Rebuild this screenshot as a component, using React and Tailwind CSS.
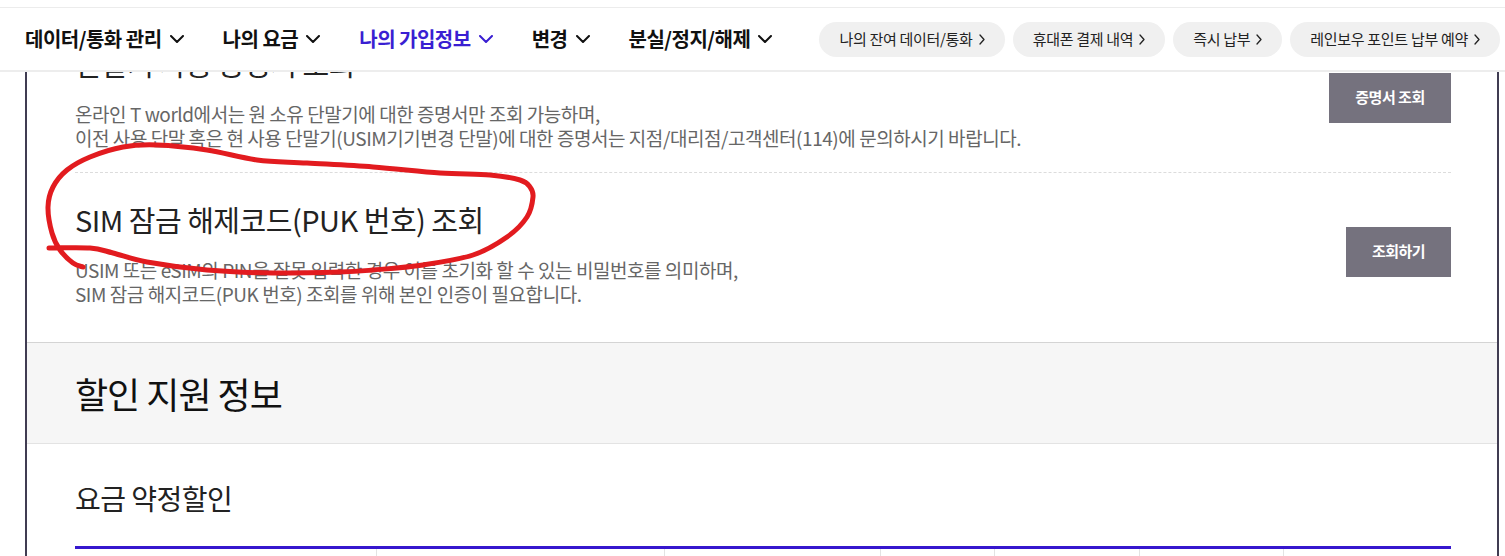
import React from 'react';

const menus = [
  { label: '데이터/통화 관리' },
  { label: '나의 요금' },
  { label: '나의 가입정보', active: true },
  { label: '변경' },
  { label: '분실/정지/해제' },
];

const quickLinks = ['나의 잔여 데이터/통화', '휴대폰 결제 내역', '즉시 납부', '레인보우 포인트 납부 예약'];

// hand-drawn red mark around the PUK heading
const markPoints = [
  [49, 248], [90, 248], [113, 253], [147, 262], [207, 270], [273, 273], [340, 272],
  [373, 270], [423, 265], [473, 255], [507, 237], [527, 217], [533, 197], [530, 187],
  [520, 180], [490, 175], [440, 173], [373, 167], [307, 163], [257, 160], [207, 150],
  [157, 145], [123, 147], [90, 157], [67, 170], [53, 187], [48, 207], [52, 233],
  [60, 250], [73, 263], [83, 267],
];

const smoothPath = (pts) => {
  let d = `M${pts[0][0]} ${pts[0][1]}`;
  for (let i = 0; i < pts.length - 1; i++) {
    const p0 = pts[i - 1] || pts[i];
    const p1 = pts[i];
    const p2 = pts[i + 1];
    const p3 = pts[i + 2] || p2;
    const c1x = p1[0] + (p2[0] - p0[0]) / 6;
    const c1y = p1[1] + (p2[1] - p0[1]) / 6;
    const c2x = p2[0] - (p3[0] - p1[0]) / 6;
    const c2y = p2[1] - (p3[1] - p1[1]) / 6;
    d += ` C${c1x} ${c1y} ${c2x} ${c2y} ${p2[0]} ${p2[1]}`;
  }
  return d;
};

const ChevronDown = ({ className }) => (
  <svg width="14" height="8" viewBox="0 0 14 8" fill="none" className={className}>
    <path d="M1 1L7 7L13 1" stroke="currentColor" strokeWidth="2" strokeLinecap="round" strokeLinejoin="round" />
  </svg>
);

const ChevronRight = () => (
  <svg width="6" height="11" viewBox="0 0 6 11" fill="none">
    <path d="M1 1L5 5.5L1 10" stroke="currentColor" strokeWidth="1.3" strokeLinecap="round" strokeLinejoin="round" />
  </svg>
);

const tableCols = ['', '', '', '', '', '', ''];

export default function App() {
  return (
    <div className="relative h-[556px] w-full overflow-hidden bg-white font-['Noto_Sans_CJK_KR','Noto_Sans',sans-serif]">
      {/* GNB */}
      <header className="absolute inset-x-0 top-0 z-20 bg-white pt-[7px]">
        <div className="flex h-[65px] items-center justify-between border-t border-b-2 border-t-[#ececec] border-b-[#ededed] pl-[25px] pr-[5px]">
          <nav className="flex items-center gap-[39px]">
            {menus.map((m) => (
              <button
                key={m.label}
                className={`flex items-center gap-2 text-[20px] font-bold tracking-[-0.5px] ${
                  m.active ? 'text-[#3a1fd2]' : 'text-[#111]'
                }`}
              >
                {m.label}
                <ChevronDown />
              </button>
            ))}
          </nav>
          <div className="flex items-center gap-2">
            {quickLinks.map((q) => (
              <a
                key={q}
                className="flex h-[35px] items-center gap-[6px] rounded-full bg-[#f0f0f0] px-5 text-[15px] tracking-[-0.3px] text-[#222]"
              >
                {q}
                <ChevronRight />
              </a>
            ))}
          </div>
        </div>
      </header>

      <main className="ml-[25px] mr-[6px] border-x-2 border-[#403c52]">
        <div className="pl-12 pr-[46px] pt-[17px]">
          <div className="flex items-center justify-between border-b border-dashed border-[#dcdcdc] pt-7 pb-[22px]">
            <div>
              <h3 className="text-[29px] leading-9 tracking-[-0.5px] text-[#222]">단말기 사용 증명서 조회</h3>
              <p className="mt-[21px] text-[19px] leading-6 tracking-[-0.45px] text-[#666]">
                온라인 T world에서는 원 소유 단말기에 대한 증명서만 조회 가능하며,
                <br />
                이전 사용 단말 혹은 현 사용 단말기(USIM기기변경 단말)에 대한 증명서는 지점/대리점/고객센터(114)에 문의하시기 바랍니다.
              </p>
            </div>
            <button className="h-[50px] w-[122px] bg-[#75727e] text-[15px] font-bold tracking-[-0.5px] text-white">
              증명서 조회
            </button>
          </div>

          <div className="flex items-center justify-between pt-7 pb-9">
            <div>
              <h3 className="text-[29px] leading-9 tracking-[-0.5px] text-[#222]">SIM 잠금 해제코드(PUK 번호) 조회</h3>
              <p className="mt-[21px] text-[19px] leading-6 tracking-[-0.45px] text-[#666]">
                USIM 또는 eSIM의 PIN을 잘못 입력한 경우 이를 초기화 할 수 있는 비밀번호를 의미하며,
                <br />
                SIM 잠금 해지코드(PUK 번호) 조회를 위해 본인 인증이 필요합니다.
              </p>
            </div>
            <button className="mt-[-4px] h-[50px] w-[105px] bg-[#75727e] text-[15px] font-bold tracking-[-0.5px] text-white">
              조회하기
            </button>
          </div>
        </div>

        <section className="flex h-[102px] items-center border-y border-t-[#d4d4d4] border-b-[#e3e3e3] bg-[#f6f6f6] pl-12">
          <h2 className="text-[36px] leading-[44px] tracking-[-1px] text-[#111]">할인 지원 정보</h2>
        </section>

        <section className="pl-12 pr-[46px] pt-9">
          <h3 className="text-[28px] leading-9 tracking-[-0.5px] text-[#222]">요금 약정할인</h3>
          <div className="mt-[30px] border-t-[3px] border-[#3617ce]">
            <div className="grid h-[40px] grid-cols-[301px_288px_216px_114px_145px_144px_1fr]">
              {tableCols.map((c, i) => (
                <div key={i} className={i === 0 ? '' : 'border-l border-[#e3e3e3]'}>
                  {c}
                </div>
              ))}
            </div>
          </div>
        </section>
      </main>

      <svg className="pointer-events-none absolute inset-0 z-30" width="1505" height="556">
        <path d={smoothPath(markPoints)} fill="none" stroke="#e21b1f" strokeWidth="5" strokeLinecap="round" strokeLinejoin="round" />
      </svg>
    </div>
  );
}
